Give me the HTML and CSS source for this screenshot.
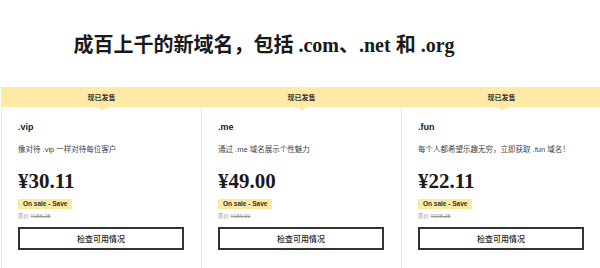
FILE: index.html
```html
<!DOCTYPE html>
<html>
<head>
  <meta charset="utf-8">
  <title>新域名</title>
  <link rel="stylesheet" href="styles.css">
</head>
<body>
  <header class="top">
    <h1 class="title">成百上千的新域名，包括 .com、.net 和 .org</h1>
  </header>

  <div class="cards">
    <div class="card">
      <div class="banner">现已发售</div>
      <div class="card-body">
        <div class="tld">.vip</div>
        <div class="desc">像对待 .vip 一样对待每位客户</div>
        <div class="price">¥30.11</div>
        <div class="badge">On sale - Save</div>
        <div class="orig">原价 <s>¥156.28</s></div>
        <button class="check">检查可用情况</button>
      </div>
    </div>

    <div class="card">
      <div class="banner">现已发售</div>
      <div class="card-body">
        <div class="tld">.me</div>
        <div class="desc">通过 .me 域名展示个性魅力</div>
        <div class="price">¥49.00</div>
        <div class="badge">On sale - Save</div>
        <div class="orig">原价 <s>¥159.00</s></div>
        <button class="check">检查可用情况</button>
      </div>
    </div>

    <div class="card">
      <div class="banner">现已发售</div>
      <div class="card-body">
        <div class="tld">.fun</div>
        <div class="desc">每个人都希望乐趣无穷，立即获取 .fun 域名！</div>
        <div class="price">¥22.11</div>
        <div class="badge">On sale - Save</div>
        <div class="orig">原价 <s>¥208.28</s></div>
        <button class="check">检查可用情况</button>
      </div>
    </div>
  </div>
</body>
</html>
```

FILE: styles.css
```css
* {
	box-sizing: border-box;
}

body {
	margin: 0;
	background-color: #fff;
	color: #222;
	font-family: "Liberation Sans", "Noto Sans CJK SC", sans-serif;
	overflow: hidden;
}

.top {
	padding: 31px 72px 28px 0;
	text-align: center;
}

.title {
	margin: 0;
	font-family: "Liberation Serif", "Noto Sans CJK SC", serif;
	font-size: 20px;
	line-height: 28px;
	font-weight: 700;
	color: #1a1a1a;
	white-space: nowrap;
}

.cards {
	display: flex;
	width: 602px;
	padding-left: 1px;
	border-top: 1px solid #ececec;
}

.card {
	flex: 0 0 200px;
	height: 200px;
	border-left: 1px solid #e8e8e8;
}

.banner {
	position: relative;
	height: 19px;
	line-height: 19px;
	background-color: #feeaa5;
	text-align: center;
	font-size: 7px;
	font-weight: 700;
	color: #333;
}

/* little arrow under the banner */
.banner::after {
	content: "";
	position: absolute;
	left: 50%;
	bottom: -4px;
	margin-left: -4px;
	border-top: 4px solid #feeaa5;
	border-left: 4px solid transparent;
	border-right: 4px solid transparent;
}

.card-body {
	padding: 0 17px 0 16px;
}

.tld {
	margin-top: 14px;
	font-size: 9px;
	line-height: 12px;
	font-weight: 700;
	color: #222;
}

.desc {
	margin-top: 11px;
	font-size: 7.5px;
	line-height: 12px;
	color: #444;
	white-space: nowrap;
}

.price {
	margin-top: 13px;
	font-family: "Liberation Serif", serif;
	font-size: 21px;
	line-height: 24px;
	font-weight: 700;
	color: #1a1a1a;
}

.badge {
	width: fit-content;
	margin-top: 6px;
	padding: 0 5px;
	height: 10px;
	line-height: 10px;
	background-color: #fde9a2;
	font-size: 6.5px;
	font-weight: 700;
	color: #333;
}

.orig {
	margin-top: 3px;
	font-size: 5.5px;
	line-height: 9px;
	color: #999;
}

.check {
	display: block;
	width: 100%;
	height: 23px;
	margin-top: 6px;
	border: 2px solid #333;
	background-color: #fff;
	font-family: "Liberation Sans", "Noto Sans CJK SC", sans-serif;
	font-size: 8px;
	font-weight: 500;
	color: #222;
	cursor: pointer;
}
```
